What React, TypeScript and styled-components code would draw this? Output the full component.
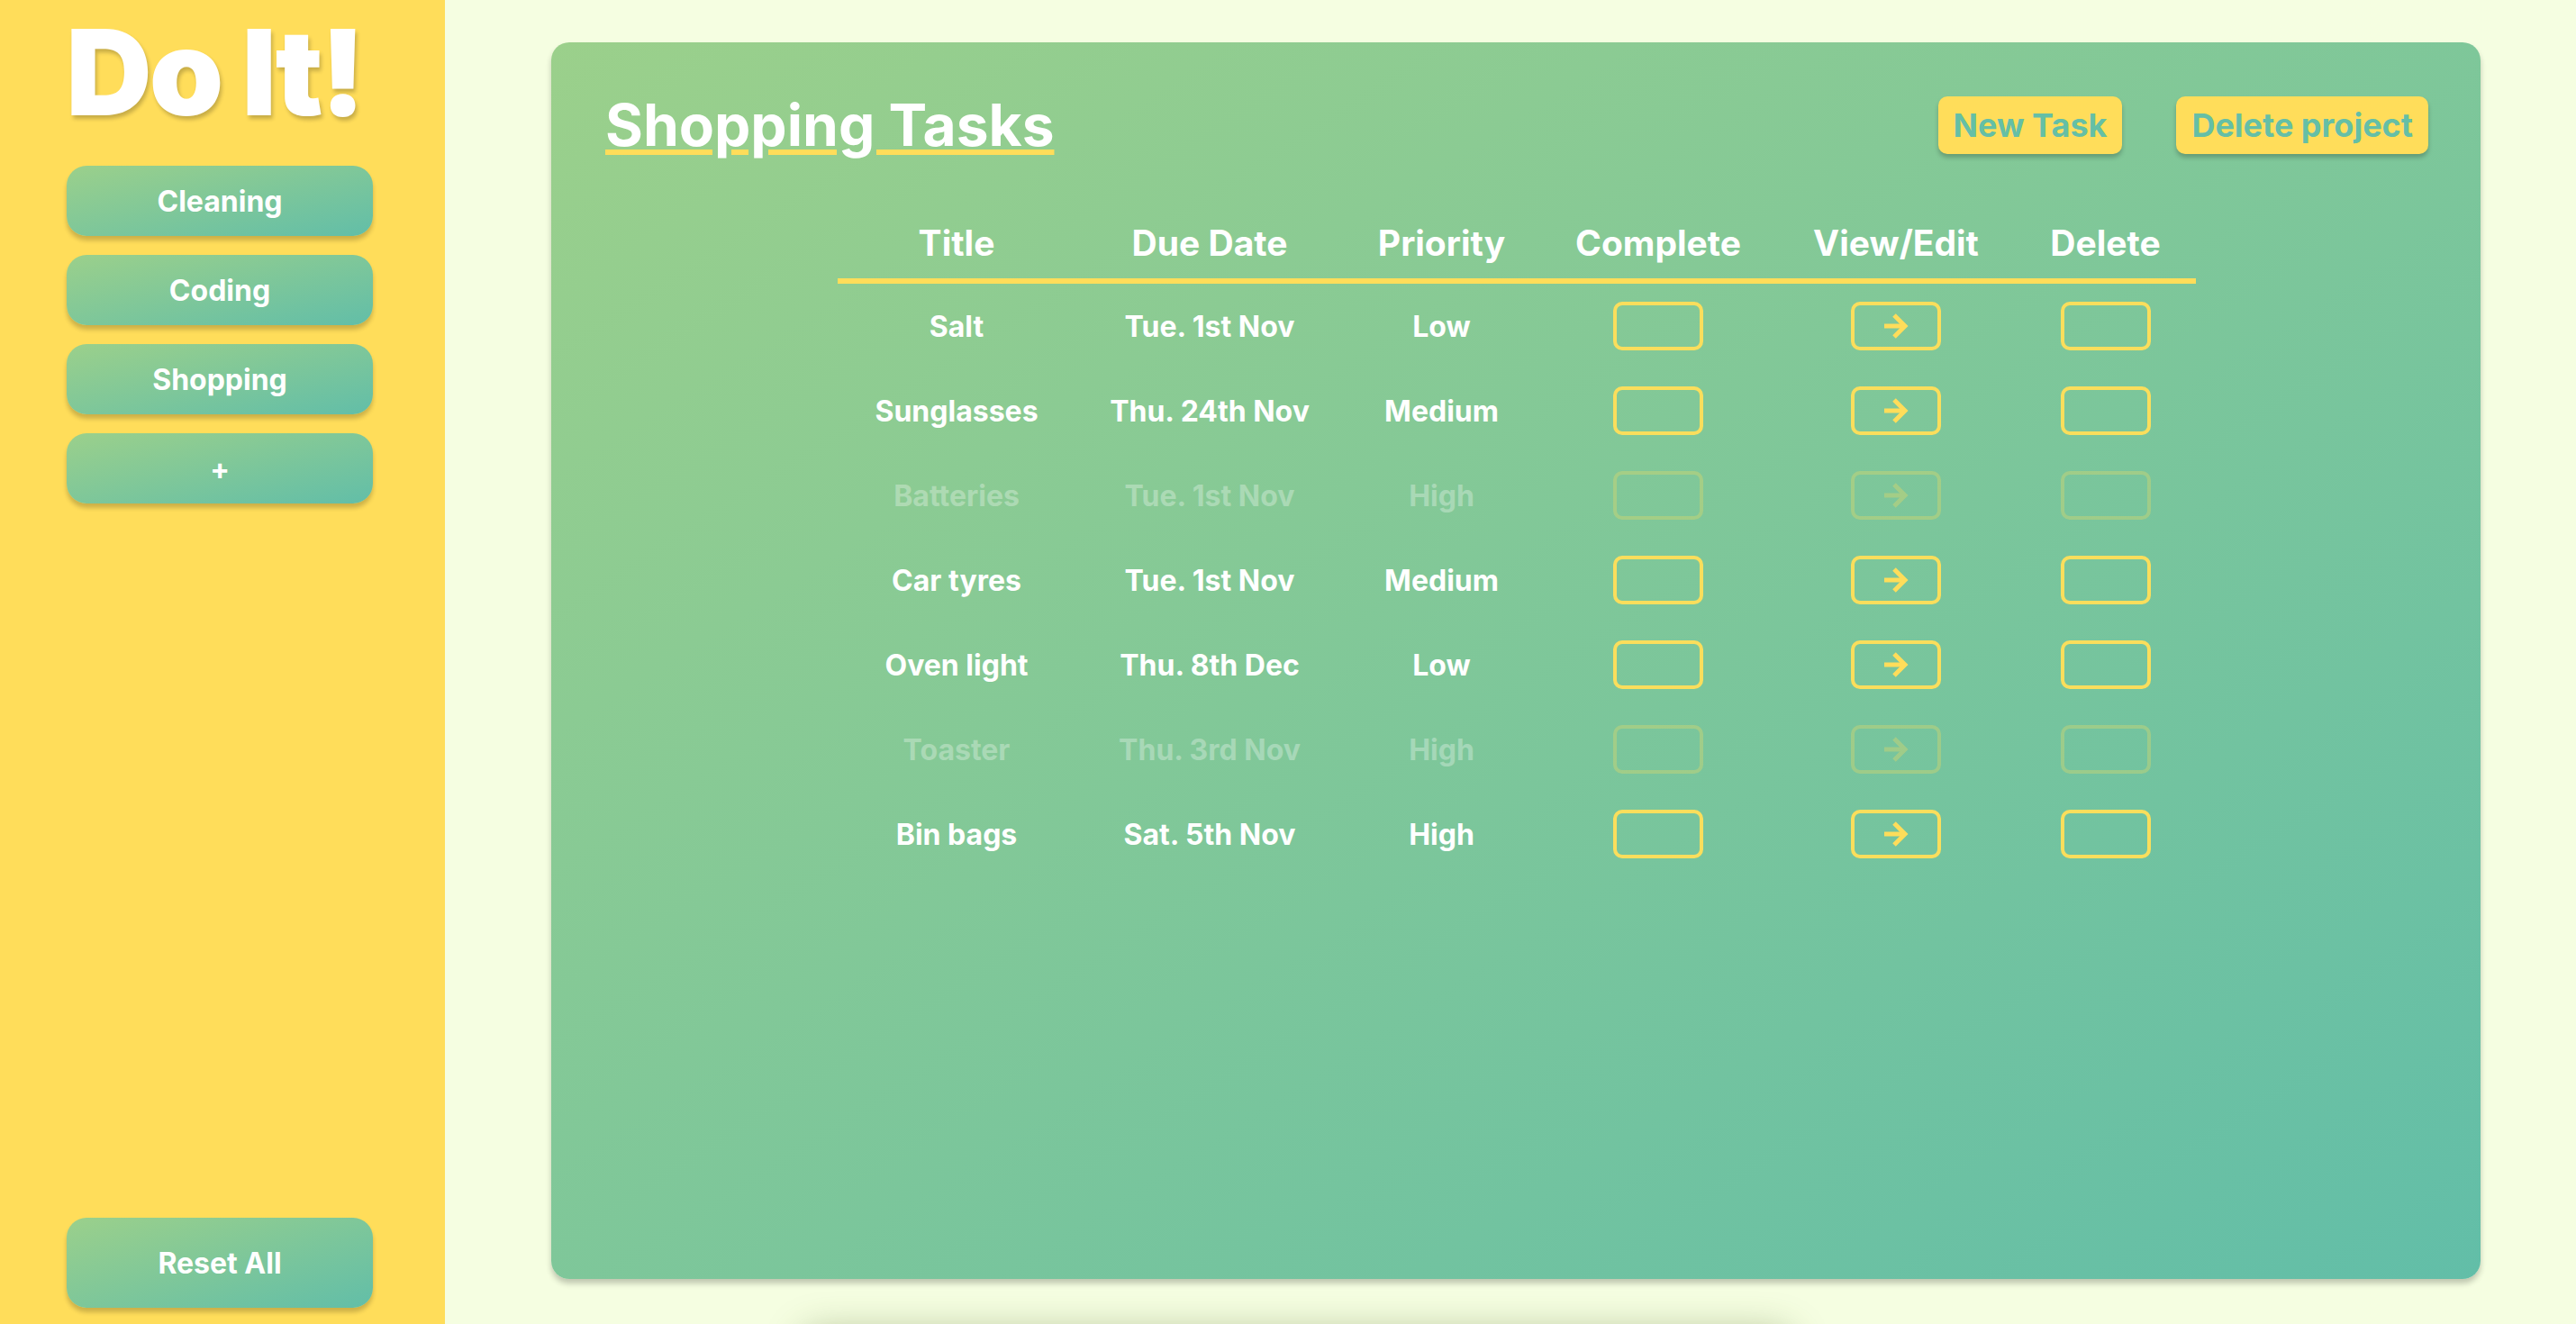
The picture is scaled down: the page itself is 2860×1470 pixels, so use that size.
import styled, { createGlobalStyle } from "styled-components";

const GlobalStyle = createGlobalStyle`
  html, body {
    margin: 0;
    padding: 0;
  }
  body {
    font-family: Inter, "Noto Sans", sans-serif;
  }
`;

const YELLOW = "#FFDD5A";
const GREEN_GRADIENT = "linear-gradient(to bottom right, #9BD08B, #62BEA8)";
const COLUMNS = "264px 298px 217px 264px 264px 201px";

const Page = styled.div`
  display: flex;
  height: 100vh;
  overflow: hidden;
  background: #f5fee1;
`;

const Sidebar = styled.aside`
  width: 494px;
  flex-shrink: 0;
  display: flex;
  flex-direction: column;
  align-items: center;
  box-sizing: border-box;
  padding: 14px 6px 18px 0;
  background: ${YELLOW};
`;

const Logo = styled.h1`
  margin: 0 12px 0 0;
  font-size: 132px;
  line-height: 1;
  font-weight: 900;
  letter-spacing: -3px;
  color: #ffffff;
  text-shadow: 2px 4px 4px rgba(0, 0, 0, 0.22);
`;

const ProjectList = styled.nav`
  display: flex;
  flex-direction: column;
  gap: 21px;
  margin-top: 38px;
`;

const ProjectButton = styled.button<{ $tall?: boolean }>`
  width: 340px;
  height: ${(p) => (p.$tall ? "100px" : "78px")};
  margin-top: ${(p) => (p.$tall ? "auto" : "0")};
  border: none;
  border-radius: 22px;
  background: ${GREEN_GRADIENT};
  box-shadow: 0 5px 5px rgba(0, 0, 0, 0.2);
  color: #ffffff;
  font-family: inherit;
  font-size: 32px;
  font-weight: 700;
  cursor: pointer;
`;

const Main = styled.main`
  flex: 1;
  min-width: 0;
  display: flex;
  flex-direction: column;
  box-sizing: border-box;
  padding: 47px 106px 0 118px;
`;

const Panel = styled.section`
  height: 1373px;
  flex-shrink: 0;
  box-sizing: border-box;
  padding: 60px 58px 0 60px;
  border-radius: 20px;
  background: ${GREEN_GRADIENT};
  box-shadow: 0 5px 6px rgba(0, 0, 0, 0.22);
`;

const PanelHeader = styled.header`
  display: flex;
  align-items: center;
  justify-content: space-between;
`;

const Title = styled.h2`
  margin: 0;
  font-size: 64px;
  line-height: 64px;
  font-weight: 700;
  color: #ffffff;
  text-decoration: underline;
  text-decoration-color: ${YELLOW};
  text-decoration-thickness: 6px;
  text-underline-offset: 4px;
`;

const Actions = styled.div`
  display: flex;
  gap: 60px;
`;

const ActionButton = styled.button`
  height: 64px;
  padding: 0 17px;
  border: none;
  border-radius: 10px;
  background: ${YELLOW};
  box-shadow: 0 4px 5px rgba(0, 0, 0, 0.22);
  color: #65bfa6;
  font-family: inherit;
  font-size: 36px;
  font-weight: 700;
  cursor: pointer;
`;

const Table = styled.div`
  width: 1508px;
  margin: 76px auto 0;
`;

const HeadRow = styled.div`
  display: grid;
  grid-template-columns: ${COLUMNS};
  border-bottom: 6px solid ${YELLOW};
`;

const HeadCell = styled.div`
  text-align: center;
  font-size: 39px;
  line-height: 46px;
  font-weight: 700;
  color: #ffffff;
  padding-bottom: 16px;
`;

const Row = styled.div<{ $done?: boolean }>`
  display: grid;
  grid-template-columns: ${COLUMNS};
  opacity: ${(p) => (p.$done ? 0.3 : 1)};
`;

const Cell = styled.div`
  height: 94px;
  display: flex;
  align-items: center;
  justify-content: center;
  font-size: 32px;
  font-weight: 700;
  color: #ffffff;
`;

const Box = styled.button`
  width: 100px;
  height: 54px;
  box-sizing: border-box;
  display: flex;
  align-items: center;
  justify-content: center;
  padding: 0;
  border: 4px solid #fade5c;
  border-radius: 10px;
  background: transparent;
  cursor: pointer;
`;

const GhostShadow = styled.div`
  flex-shrink: 0;
  width: 1100px;
  height: 60px;
  margin: 58px 0 0 278px;
  border-radius: 20px;
  background: #f5fee1;
  box-shadow: 0 0 40px 0 rgba(80, 100, 40, 0.4);
`;

const Arrow = () => (
  <svg width="28" height="28" viewBox="0 0 28 28" fill="none">
    <path d="M1 14H24" stroke={YELLOW} strokeWidth="5" />
    <path d="M12 2L24 14L12 26" stroke={YELLOW} strokeWidth="5" strokeLinejoin="miter" />
  </svg>
);

const tasks = [
  { title: "Salt", due: "Tue. 1st Nov", priority: "Low", done: false },
  { title: "Sunglasses", due: "Thu. 24th Nov", priority: "Medium", done: false },
  { title: "Batteries", due: "Tue. 1st Nov", priority: "High", done: true },
  { title: "Car tyres", due: "Tue. 1st Nov", priority: "Medium", done: false },
  { title: "Oven light", due: "Thu. 8th Dec", priority: "Low", done: false },
  { title: "Toaster", due: "Thu. 3rd Nov", priority: "High", done: true },
  { title: "Bin bags", due: "Sat. 5th Nov", priority: "High", done: false },
];

const headings = ["Title", "Due Date", "Priority", "Complete", "View/Edit", "Delete"];

export default function App() {
  return (
    <>
      <GlobalStyle />
      <Page>
        <Sidebar>
          <Logo>Do It!</Logo>
          <ProjectList>
            <ProjectButton>Cleaning</ProjectButton>
            <ProjectButton>Coding</ProjectButton>
            <ProjectButton>Shopping</ProjectButton>
            <ProjectButton>+</ProjectButton>
          </ProjectList>
          <ProjectButton $tall>Reset All</ProjectButton>
        </Sidebar>
        <Main>
          <Panel>
            <PanelHeader>
              <Title>Shopping Tasks</Title>
              <Actions>
                <ActionButton>New Task</ActionButton>
                <ActionButton>Delete project</ActionButton>
              </Actions>
            </PanelHeader>
            <Table>
              <HeadRow>
                {headings.map((h) => (
                  <HeadCell key={h}>{h}</HeadCell>
                ))}
              </HeadRow>
              {tasks.map((t) => (
                <Row key={t.title} $done={t.done}>
                  <Cell>{t.title}</Cell>
                  <Cell>{t.due}</Cell>
                  <Cell>{t.priority}</Cell>
                  <Cell>
                    <Box />
                  </Cell>
                  <Cell>
                    <Box>
                      <Arrow />
                    </Box>
                  </Cell>
                  <Cell>
                    <Box />
                  </Cell>
                </Row>
              ))}
            </Table>
          </Panel>
          <GhostShadow />
        </Main>
      </Page>
    </>
  );
}
